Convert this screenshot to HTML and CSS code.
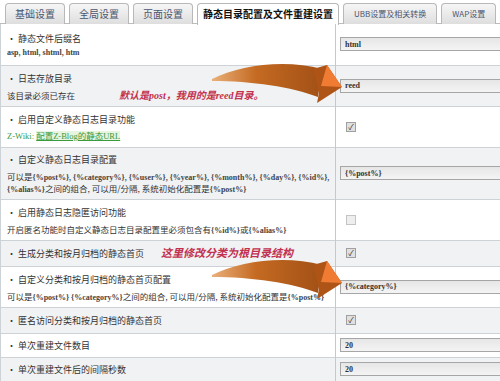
FILE: index.html
```html
<!DOCTYPE html>
<html lang="zh-CN">
<head>
  <meta charset="UTF-8" />
  <title>静态目录配置及文件重建设置</title>
  <link rel="stylesheet" href="styles.css">
</head>
<body>

  <div class="tabs">
    <div class="tab">基础设置</div>
    <div class="tab">全局设置</div>
    <div class="tab">页面设置</div>
    <div class="tab on">静态目录配置及文件重建设置</div>
    <div class="tab sm">UBB设置及相关转换</div>
    <div class="tab sm">WAP设置</div>
  </div>

  <div class="panel">
    <table class="settings">
      <tr class="two">
        <td class="label"><div class="title">· 静态文件后缀名</div><div class="desc code">asp, html, shtml, htm</div></td>
        <td class="field"><input class="txt" type="text" value="html" /></td>
      </tr>
      <tr class="two alt">
        <td class="label"><div class="title">· 日志存放目录</div><div class="desc">该目录必须已存在<span class="note">默认是post，我用的是reed目录。</span></div></td>
        <td class="field"><input class="txt" type="text" value="reed" /></td>
      </tr>
      <tr class="two">
        <td class="label"><div class="title">· 启用自定义静态日志目录功能</div><div class="desc green">Z-Wiki: <a href="#">配置Z-Blog的静态URL</a></div></td>
        <td class="field"><span class="chk">✓</span></td>
      </tr>
      <tr class="three alt">
        <td class="label"><div class="title">· 自定义静态日志目录配置</div><div class="desc">可以是<span class="code">{%post%}, {%category%}, {%user%}, {%year%}, {%month%}, {%day%}, {%id%},</span><br><span class="code">{%alias%}</span>之间的组合, 可以用/分隔, 系统初始化配置是<span class="code">{%post%}</span></div></td>
        <td class="field"><input class="txt" type="text" value="{%post%}" /></td>
      </tr>
      <tr class="two">
        <td class="label"><div class="title">· 启用静态日志隐匿访问功能</div><div class="desc">开启匿名功能时自定义静态日志目录配置里必须包含有<span class="code">{%id%}</span>或<span class="code">{%alias%}</span></div></td>
        <td class="field"><span class="chk off"></span></td>
      </tr>
      <tr class="one alt">
        <td class="label"><div class="title">· 生成分类和按月归档的静态首页<span class="note big">这里修改分类为根目录结构</span></div></td>
        <td class="field"><span class="chk">✓</span></td>
      </tr>
      <tr class="two">
        <td class="label"><div class="title">· 自定义分类和按月归档的静态首页配置</div><div class="desc">可以是<span class="code">{%post%} {%category%}</span>之间的组合, 可以用/分隔, 系统初始化配置是<span class="code">{%post%}</span></div></td>
        <td class="field"><input class="txt" type="text" value="{%category%}" /></td>
      </tr>
      <tr class="one alt">
        <td class="label"><div class="title">· 匿名访问分类和按月归档的静态首页</div></td>
        <td class="field"><span class="chk">✓</span></td>
      </tr>
      <tr class="one short">
        <td class="label"><div class="title">· 单次重建文件数目</div></td>
        <td class="field"><input class="txt" type="text" value="20" /></td>
      </tr>
      <tr class="one short alt">
        <td class="label"><div class="title">· 单次重建文件后的间隔秒数</div></td>
        <td class="field"><input class="txt" type="text" value="20" /></td>
      </tr>
    </table>

    <!-- annotation arrows drawn over the table -->
    <svg class="arrow a1" width="145" height="50" viewBox="200 60 145 50">
      <defs>
        <linearGradient id="body" x1="0" x2="1" y1="0" y2="0">
          <stop offset="0" stop-color="#eab07a"/>
          <stop offset="0.4" stop-color="#c46a22"/>
          <stop offset="1" stop-color="#a25016"/>
        </linearGradient>
      </defs>
      <path d="M212 80 C 240 66, 285 60, 322 70 L 318 98 C 292 88, 252 82, 212 82 Z" fill="url(#body)"/>
      <path d="M313 70 L 327 66 L 342 88 L 317 104 L 319 94 Z" fill="#ad5416"/>
      <path d="M327 66 L 342 88 L 321 87 Z" fill="#f07c34"/>
    </svg>
    <svg class="arrow a2" width="145" height="50" viewBox="200 60 145 50">
      <path d="M212 80 C 240 66, 285 60, 322 70 L 318 98 C 292 88, 252 82, 212 82 Z" fill="url(#body)"/>
      <path d="M313 70 L 327 66 L 342 88 L 317 104 L 319 94 Z" fill="#ad5416"/>
      <path d="M327 66 L 342 88 L 321 87 Z" fill="#f07c34"/>
    </svg>
  </div>

</body>
</html>
```

FILE: styles.css
```css
* {
  box-sizing: border-box;
  margin: 0;
  padding: 0;
}
html, body {
  width: 100%;
  height: 100%;
}
body {
  background: #fff;
  font-family: "Noto Sans CJK SC", "Liberation Sans", sans-serif;
  font-size: 9px;
  color: #333;
  overflow: hidden;
}
.tabs {
  display: flex;
  gap: 4px;
  height: 24px;
  padding: 3px 0 0 5px;
  border-bottom: 1px solid #bcbcbc;
}
.tab {
  height: 21px;
  line-height: 19px;
  padding: 0 9px;
  border: 1px solid #b8b8b8;
  border-bottom: none;
  border-radius: 4px 4px 0 0;
  background: linear-gradient(#f6f6f6, #dedede);
  font-size: 10px;
  color: #4a5670;
  white-space: nowrap;
}
.tab.on {
  height: 22px;
  padding: 0 5px;
  background: #fff;
  color: #111;
  font-weight: bold;
}
.tab.sm {
  font-size: 8px;
  padding: 0 10px;
}
.panel {
  position: relative;
}
.settings {
  width: 520px;
  border-collapse: collapse;
  border-left: 1px solid #cdd2d6;
}
.settings tr {
  border-bottom: 1px solid #cdd2d6;
}
.settings tr.alt {
  background: #f1f2f4;
}
.settings tr.one td {
  height: 26px;
}
.settings tr.one.short td {
  height: 24px;
}
.settings tr.two td {
  height: 41px;
}
.settings tr.three td {
  height: 52px;
}
.label {
  width: 337px;
  padding: 2px 4px 2px 6px;
  border-right: 1px solid #c4c9cd;
  vertical-align: middle;
}
.title {
  height: 15px;
  line-height: 15px;
  white-space: nowrap;
}
.desc {
  margin-top: 3px;
  line-height: 12px;
  font-size: 8.5px;
  white-space: nowrap;
}
.code {
  font-family: "Liberation Serif", serif;
  font-size: 8px;
  font-weight: bold;
  line-height: 1;
  color: #444;
}
.green,
.green a {
  color: #3b9a3b;
  font-family: "Liberation Serif", "Noto Sans CJK SC", serif;
}
.green a {
  text-decoration: underline;
  background: #e6f4e0;
}
.note {
  margin-left: 44px;
  font-family: "Liberation Serif", "Noto Sans CJK SC", serif;
  font-size: 10px;
  font-weight: bold;
  font-style: italic;
  line-height: 1;
  color: #c2304e;
}
.note.big {
  margin-left: 17px;
  font-size: 11px;
}
.field {
  padding: 0 0 0 4px;
  vertical-align: middle;
}
.txt {
  display: block;
  width: 180px;
  height: 14px;
  padding: 0 4px;
  border: 1px solid #a6a6a6;
  background: linear-gradient(#e6e6e6, #f4f4f4);
  font-family: "Liberation Serif", serif;
  font-size: 8px;
  font-weight: bold;
  color: #333;
}
.chk {
  display: block;
  width: 10px;
  height: 10px;
  margin-left: 6px;
  border: 1px solid #a0a0a0;
  background: #e0e0e0;
  font-size: 8px;
  line-height: 8px;
  text-align: center;
  color: #333;
}
.chk.off {
  border-color: #c4c4c4;
  background: #eeeeee;
}
.arrow {
  position: absolute;
  left: 200px;
}
.arrow.a1 {
  top: 35px;
}
.arrow.a2 {
  top: 231px;
}
```
